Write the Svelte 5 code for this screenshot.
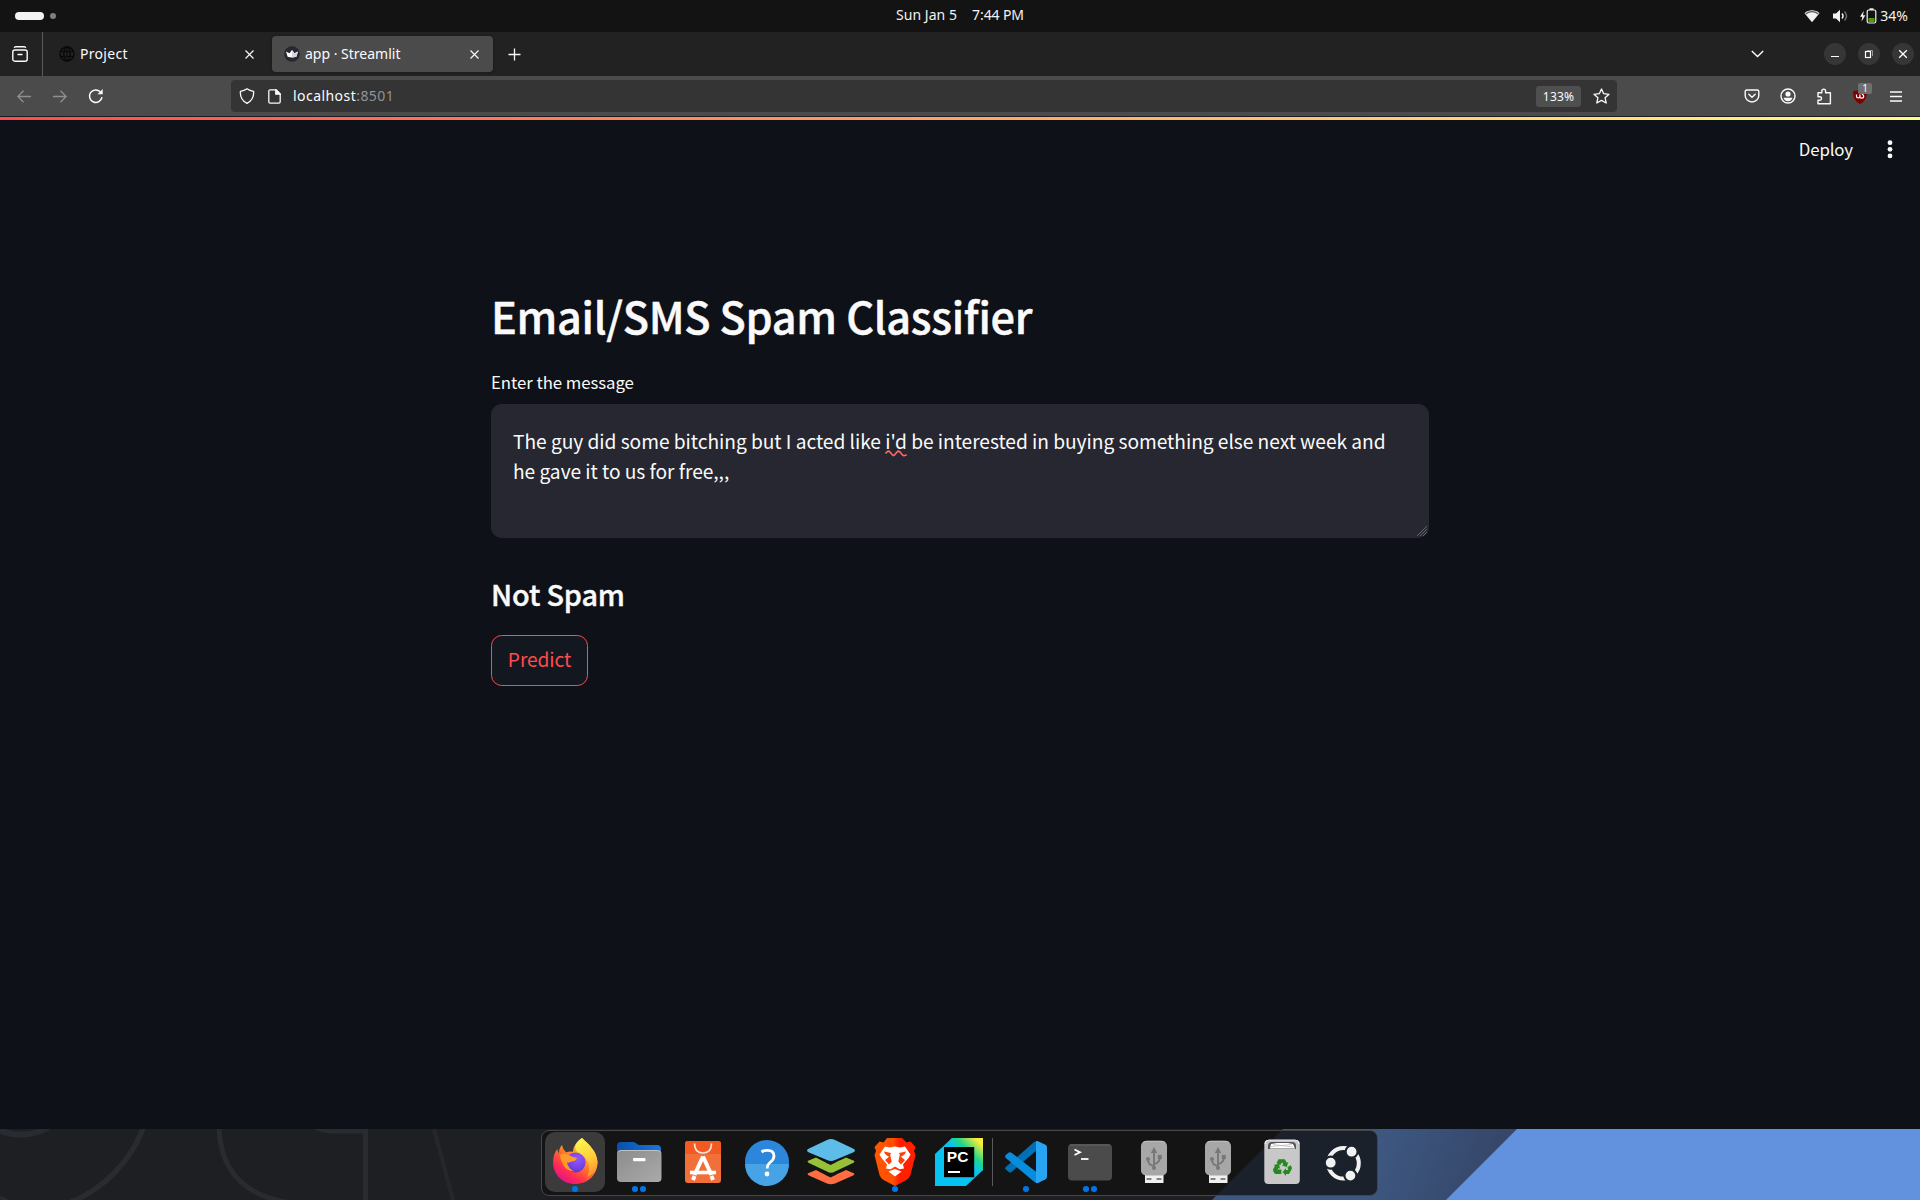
<script>
  const apps = [
    { id: 'firefox', dots: 1, active: true },
    { id: 'files', dots: 2 },
    { id: 'software', dots: 0 },
    { id: 'help', dots: 0 },
    { id: 'stack', dots: 0 },
    { id: 'brave', dots: 1 },
    { id: 'pycharm', dots: 0 },
    { id: 'separator', dots: 0 },
    { id: 'vscode', dots: 1 },
    { id: 'terminal', dots: 2 },
    { id: 'usb', dots: 0 },
    { id: 'usb', dots: 0 },
    { id: 'trash', dots: 0 },
    { id: 'ubuntu', dots: 0 }
  ];
</script>

<div class="screen">
  <header class="panel">
    <div class="workspaces"><span class="pill"></span><span class="dot"></span></div>
    <div class="clock"><span class="date">Sun Jan 5</span><span>7:44 PM</span></div>
    <div class="status">
      <svg class="wifi" width="16" height="14" viewBox="0 0 16 14">
        <path d="M.5 4.2C4.8.4 11.200.4 15.500 4.200L8 13.300Z" fill="#f2f2f2" />
        <path d="M1.700 4.900C5.600 2 10.400 2 14.300 4.900" fill="none" stroke="#555" stroke-width="1.200" />
      </svg>
      <svg class="volume" width="15" height="14" viewBox="0 0 15 14">
        <path d="M0 4.500h3L7 .8v12.400L3 9.500H0Z" fill="#f2f2f2" />
        <path d="M9 4.500c1.300 1.500 1.300 3.500 0 5" fill="none" stroke="#f2f2f2" stroke-width="1.400" />
        <path d="M11.500 2.500c2.500 2.700 2.500 6.300 0 9" fill="none" stroke="#777" stroke-width="1.300" />
      </svg>
      <svg class="battery" width="17" height="16" viewBox="0 0 17 16">
        <path d="M3.800 2.800 0 8.800h2.300l-.8 4.700L5.400 7.300H3Z" fill="#f2f2f2" />
        <rect x="7.200" y="2" width="8.600" height="13" rx="1.500" fill="none" stroke="#f2f2f2" stroke-width="1.200" />
        <rect x="9.500" y=".3" width="4" height="1.700" fill="#f2f2f2" />
        <rect x="8.500" y="10" width="6" height="4" fill="#4e9a06" />
      </svg>
      <span class="percent">34%</span>
    </div>
  </header>

  <nav class="tabs">
    <div class="overview">
      <svg width="16" height="16" viewBox="0 0 16 16" fill="none" stroke="#fbfbfe" stroke-width="1.400">
        <rect x=".8" y="4" width="14.400" height="11.200" rx="2" />
        <path d="M2.500 1.200C3 .8 3 .8 4 .8h8c1 0 1 0 1.500.4M6 8.500h4" stroke-linecap="round" />
      </svg>
    </div>
    <div class="tab">
      <svg class="favicon" width="16" height="16" viewBox="0 0 16 16" fill="none" stroke="#080808" stroke-width="1.300">
        <circle cx="8" cy="8" r="7" />
        <ellipse cx="8" cy="8" rx="3.200" ry="7" />
        <path d="M1.500 5.600h13M1.500 10.400h13M8 1v14" stroke-width="1" />
      </svg>
      <span class="name project">Project</span>
      <svg class="close" width="9" height="9" viewBox="0 0 9 9"><path d="M.5.5l8 8M8.500.5l-8 8" stroke="#fbfbfe" stroke-width="1.100" /></svg>
    </div>
    <div class="tab current">
      <svg class="favicon" width="16" height="16" viewBox="0 0 16 16">
        <circle cx="8" cy="8" r="7.800" fill="#262730" />
        <path d="M2 5.500 5.500 7.300 8 4l2.500 3.300L14 5.500l-1.600 5.300Q8 12 3.600 10.800Z" fill="#fff" />
        <path d="M8 4l2.500 3.300L14 5.500l-1.600 5.300L8 11.400Z" fill="#d5d5da" />
      </svg>
      <span class="name app">app · Streamlit</span>
      <svg class="close" width="9" height="9" viewBox="0 0 9 9"><path d="M.5.5l8 8M8.500.5l-8 8" stroke="#fbfbfe" stroke-width="1.100" /></svg>
    </div>
    <svg class="plus" width="13" height="13" viewBox="0 0 13 13"><path d="M6.500.5v12M.5 6.500h12" stroke="#fbfbfe" stroke-width="1.300" /></svg>
    <svg class="chevron" width="13" height="8" viewBox="0 0 13 8"><path d="M.8.9 6.500 6.600 12.200.9" fill="none" stroke="#fbfbfe" stroke-width="1.400" /></svg>
    <div class="controls">
      <span class="control"><svg width="22" height="22" viewBox="0 0 22 22"><path d="M7 13.500h8" stroke="#fff" /></svg></span>
      <span class="control">
        <svg width="22" height="22" viewBox="0 0 22 22" fill="none">
          <rect x="7.500" y="8.500" width="5" height="6" stroke="#fff" stroke-width="1.200" />
          <path d="M9 7.500h5.500V13" stroke="#999" />
        </svg>
      </span>
      <span class="control"><svg width="22" height="22" viewBox="0 0 22 22"><path d="M7.200 7.200l7.600 7.600M14.800 7.200l-7.600 7.600" stroke="#fff" stroke-width="1.300" /></svg></span>
    </div>
  </nav>

  <div class="toolbar">
    <div class="history">
      <svg width="14" height="13" viewBox="0 0 14 13" fill="none" stroke="#8f8f90" stroke-width="1.300"><path d="M14 6.500H1M6.500.8.9 6.500l5.600 5.700" /></svg>
      <svg width="14" height="13" viewBox="0 0 14 13" fill="none" stroke="#8f8f90" stroke-width="1.300"><path d="M0 6.500h13M7.500.8l5.600 5.700-5.600 5.700" /></svg>
      <svg class="reload" width="16" height="16" viewBox="0 0 16 16" fill="none" stroke="#fbfbfe" stroke-width="1.500">
        <path d="M14 9.200A6.300 6.300 0 1 1 12.300 3.800" />
        <path d="M14.700 1v5.200H9.500Z" fill="#fbfbfe" stroke="none" />
      </svg>
    </div>
    <div class="urlbar">
      <svg class="shield" width="16" height="16" viewBox="0 0 16 16" fill="none" stroke="#fbfbfe" stroke-width="1.300">
        <path d="M8 .8C10 2.300 12 3 14.600 3.400 15 8.500 12.800 12.800 8 15.300 3.200 12.800 1 8.500 1.400 3.400 4 3 6 2.300 8 .8Z" stroke-linejoin="round" />
      </svg>
      <svg class="page" width="13" height="15" viewBox="0 0 13 15" fill="none" stroke="#fbfbfe" stroke-width="1.300">
        <path d="M8 .8H2.200Q.8.8.8 2.200v10.600q0 1.400 1.400 1.400h8.600q1.400 0 1.400-1.400V5Z" stroke-linejoin="round" />
        <path d="M7.800.8 12.200 5.200H7.800Z" fill="#fbfbfe" />
      </svg>
      <span class="url">localhost<span class="port">:8501</span></span>
      <span class="zoom">133%</span>
      <svg class="star" width="17" height="16" viewBox="0 0 17 16" fill="none" stroke="#fbfbfe" stroke-width="1.300" stroke-linejoin="round">
        <path d="M8.500 1l2.200 4.700 5.300.6-3.900 3.500 1.100 5.200-4.700-2.600L3.800 15l1.100-5.200L1 6.300l5.300-.6Z" />
      </svg>
    </div>
    <div class="actions">
      <svg width="16" height="16" viewBox="0 0 16 16" fill="none" stroke="#fbfbfe" stroke-width="1.400">
        <path d="M2.800 2h10.400Q14.800 2 14.800 3.600v3.800a6.800 6.600 0 0 1-13.600 0V3.600Q1.200 2 2.800 2Z" />
        <path d="M4.800 6.200 8 9.300l3.200-3.100" stroke-linecap="round" />
      </svg>
      <svg width="16" height="16" viewBox="0 0 16 16">
        <circle cx="8" cy="8" r="7" fill="none" stroke="#fbfbfe" stroke-width="1.400" />
        <circle cx="8" cy="6" r="2.600" fill="#fbfbfe" />
        <path d="M3.500 9.800h9Q11.500 13.200 8 13.200T3.500 9.800Z" fill="#fbfbfe" />
      </svg>
      <svg width="16" height="17" viewBox="0 0 16 17" fill="none" stroke="#fbfbfe" stroke-width="1.400" stroke-linejoin="round">
        <path d="M2 4.800h3.800V3a1.900 1.900 0 0 1 3.800 0v1.800h4.800v11H2v-3.600h1.800a1.700 1.700 0 0 0 0-3.500H2Z" />
      </svg>
      <span class="blocker">
        <svg width="16" height="17" viewBox="0 0 16 17">
          <path d="M8 1c2 1.300 4 2 6.800 2 .4 6-1.500 10.300-6.800 13C2.700 13.300.8 9 1.200 3 4 3 6 2.300 8 1Z" fill="#800000" />
          <path d="M4.500 6.500v1.800a1.700 1.700 0 0 0 3.400 0V6.500m0 1.800a1.900 1.900 0 1 0 1.900-1.900" fill="none" stroke="#fff" stroke-width="1.200" />
        </svg>
        <span class="badge">1</span>
      </span>
      <svg width="12" height="11" viewBox="0 0 12 11"><path d="M0 1h12M0 5.500h12M0 10h12" stroke="#fbfbfe" stroke-width="1.300" /></svg>
    </div>
  </div>

  <main class="app-view">
    <div class="decoration"></div>
    <div class="app-header">
      <span class="deploy">Deploy</span>
      <svg width="6" height="20" viewBox="0 0 6 20" fill="#fafafa"><circle cx="3" cy="3.700" r="2.400" /><circle cx="3" cy="10.300" r="2.400" /><circle cx="3" cy="16.900" r="2.400" /></svg>
    </div>
    <section class="block">
      <h1>Email/SMS Spam Classifier</h1>
      <div class="label">Enter the message</div>
      <div class="textarea">
        <p>The guy did some bitching but I acted like <span class="misspelt">i'd<svg class="squiggle" width="22" height="7" viewBox="0 0 22 7"><path d="M.5 3.500 2 2Q3.500.5 5 2L7.500 5Q8.500 6 9.500 5L12 2Q13.500.5 15 2L17.500 5Q18.500 6 19.500 5.500L21.800 5" fill="none" stroke="#ff6666" stroke-width="1.700" /></svg></span> be interested in buying something else next week and</p>
        <p>he gave it to us for free,,,</p>
        <svg class="grip" width="12" height="12" viewBox="0 0 12 12"><path d="M1 11 11 1M4 11l7-7M7 11l4-4" stroke="#77777d" stroke-width=".8" /></svg>
      </div>
      <h2>Not Spam</h2>
      <button>Predict</button>
    </section>
  </main>

  <footer class="desktop">
    <svg class="wallpaper" width="1920" height="71" viewBox="0 0 1920 71">
      <defs>
        <linearGradient id="shade" gradientUnits="userSpaceOnUse" x1="1380" y1="30" x2="1480" y2="65">
          <stop offset="0" stop-color="#3d5780" /><stop offset="1" stop-color="#36476a" />
        </linearGradient>
      </defs>
      <rect width="1920" height="71" fill="#1e1f23" />
      <g fill="none" stroke="#2a2a31" stroke-width="5">
        <circle cx="21" cy="-48" r="53.500" stroke-width="6" />
        <circle cx="21" cy="-48" r="131" stroke-width="5.500" />
        <path d="M219 0Q222 62 286 73" />
        <path d="M313-3Q322 2 335 2h30.500v72" />
        <path d="M434 0l19 71" stroke="#26262b" stroke-width="4" />
        <path d="M0 68.500l8 4" stroke-width="4" />
      </g>
      <path d="M1283 0h640v71H1212Z" fill="url(#shade)" />
      <path d="M1517 0h403v71H1446Z" fill="#6292de" />
    </svg>
    <div class="dock">
      {#each apps as app}
        {#if app.id === 'separator'}
          <span class="separator"></span>
        {:else}
          <div class="launcher" class:active={app.active}>
            <svg width="48" height="48" viewBox="0 0 48 48">
              {#if app.id === 'firefox'}
                <defs>
                  <linearGradient id="ff" x1=".85" y1=".1" x2=".25" y2=".95">
                    <stop offset="0" stop-color="#fff44f" /><stop offset=".3" stop-color="#ffb02e" /><stop offset=".55" stop-color="#ff6a2a" /><stop offset=".8" stop-color="#ff2a55" /><stop offset="1" stop-color="#e31587" />
                  </linearGradient>
                  <radialGradient id="globe" cx=".6" cy=".3" r=".8">
                    <stop offset="0" stop-color="#9059ff" /><stop offset=".6" stop-color="#7542e5" /><stop offset="1" stop-color="#592acb" />
                  </radialGradient>
                  <linearGradient id="flame" x1=".4" y1="0" x2=".7" y2="1">
                    <stop offset="0" stop-color="#fff44f" /><stop offset=".5" stop-color="#ffd23b" /><stop offset="1" stop-color="#ff8f2e" />
                  </linearGradient>
                </defs>
                <path d="M31 0C39 7 46 14 46.500 24 46.500 37 37 46 24 46S2 36 2 24C2 19 3.500 14 6.500 11Q6.500 14 8 15 8 10 11 7q.5 4 4 7.200 3-.8 7-.5Q22 6 31 0Z" fill="url(#ff)" />
                <path d="M31 0C38 7 46 14 46.500 24 46 32 41 37 36 39 41 31 37 19 29 15.500 23 13 22 6 31 0Z" fill="url(#flame)" />
                <circle cx="24.500" cy="24.500" r="10" fill="url(#globe)" />
                <path d="M9 17Q13 13.500 22 19q2.500.5 4 1-1.500 3.500-5.500 3.500-2.500 1.500-4.500 1 1 6 7.500 9-9-.5-12-8Q9 21 9 17Z" fill="#ff9a2b" />
              {:else if app.id === 'files'}
                <defs>
                  <linearGradient id="folder" x1="0" y1="0" x2="1" y2="1"><stop offset="0" stop-color="#8c8c8c" /><stop offset="1" stop-color="#aaa" /></linearGradient>
                  <linearGradient id="back" x1="0" y1="0" x2="1" y2="0"><stop offset="0" stop-color="#0a50a8" /><stop offset="1" stop-color="#1b74dc" /></linearGradient>
                </defs>
                <path d="M2 8Q2 4 6 4h12q2 0 3.500 1.500T25 7h17q4 0 4 4v20H2Z" fill="url(#back)" />
                <rect x="2" y="12" width="44.500" height="32" rx="4" fill="url(#folder)" />
                <path d="M3 14.500Q4 12.500 6 12.500h36.500q2 0 3 2" fill="none" stroke="#c5c5c5" stroke-width=".9" />
                <rect x="18" y="20" width="12.500" height="3.300" rx="1" fill="#fff" />
              {:else if app.id === 'software'}
                <rect x="6" y="3" width="36" height="42" rx="3" fill="#f1703a" />
                <path d="M6 16V6q0-3 3-3h30q3 0 3 3v10Z" fill="#f25a22" />
                <path d="M15.500 5.500q0 9.500 8.500 9.500t8.500-9.500" fill="none" stroke="#fbe4da" stroke-width="1.700" />
                <g fill="none" stroke="#fff" stroke-width="4"><path d="M24 18.500 15.500 37M24 18.500 32.500 37" /><path d="M11 34.500h26" stroke-width="3.600" /><path d="M15.500 38l-1.500 4M32.500 38l1.500 4" stroke-width="4" /></g>
              {:else if app.id === 'help'}
                <circle cx="24" cy="24" r="22" fill="#2b86dc" />
                <path d="M2 26a22 22 0 0 0 44 0Z" fill="#45a3e6" />
                <path d="M18.500 14Q21 12.300 24.500 12.300q6.500 0 6.500 5.700 0 3.500-4 6.500-2.800 2.300-2.800 6" fill="none" stroke="#fff" stroke-width="2.800" />
                <circle cx="24" cy="36" r="2.400" fill="#fff" />
              {:else if app.id === 'stack'}
                <path d="M3 34.500 9 32q15 8 15 7.500T39 32l6 2.500q5 1.300 0 3.500L28 45.500q-4 1.500-8 0L3 38q-5-2.200 0-3.500Z" fill="#ff6e40" />
                <path d="M3 22l6-2.500q15 8 15 7.500t15-7.500l6 2.500q5 1.300 0 3.500L28 33.500q-4 2.500-8 0L3 25.500Q-2 23.300 3 22Z" fill="#97c039" />
                <path d="M2 10.500 20 2q4-1.800 8 0l18 8.500q4 2 0 4L28 22q-4 2-8 0L2 14.500q-4-2 0-4Z" fill="#5dbde8" />
              {:else if app.id === 'brave'}
                <defs><linearGradient id="brave" x1="0" x2="1"><stop offset="0" stop-color="#ff5500" /><stop offset=".45" stop-color="#ff5000" /><stop offset=".6" stop-color="#ff2000" /><stop offset="1" stop-color="#ff2000" /></linearGradient></defs>
                <path d="M16 0h15l4.500 4.500 4-1L44.500 9 43 13l1.500 4-5 20q-1 3-4 5L24 48l-11.500-6q-3-2-4-5L3.500 17 5 13 3.500 9l5-5.500 4 1Z" fill="url(#brave)" />
                <path d="M14 8.500l5 1 5-1 5 1 5-1 5.500 8-2 3.500-5.500 6.500 1 4-4.500.8-4.500-2.800-4.500 2.800-4.500-.8 1-4L10.500 20l-2-3.500Z" fill="#fff" />
                <path d="M13 13.500l7 1.500-.8 2 1.500 6.500-2.700 3-4-4.500 4-3.200Q14 17 13 13.500ZM35 13.500l-7 1.500.8 2-1.500 6.500 2.700 3 4-4.500-4-3.200Q34 17 35 13.500Z" fill="#ff4008" />
                <path d="M17.500 33.500 24 31l6.500 2.500L24 38.500Z" fill="#fff" />
              {:else if app.id === 'pycharm'}
                <defs><linearGradient id="pc" x1=".5" y1=".55" x2="1" y2=".05"><stop offset="0" stop-color="#07c3f2" /><stop offset=".35" stop-color="#21d789" /><stop offset=".85" stop-color="#fced3a" /></linearGradient></defs>
                <path d="M0 16 17 0h31v32L31 48H0Z" fill="#07c3f2" />
                <path d="M17 0h31v32L38 38 10 9Z" fill="url(#pc)" />
                <rect x="9" y="9" width="30.200" height="30.200" />
                <rect x="13" y="33" width="12" height="2" fill="#fff" />
                <text class="pc" x="11.800" y="24">PC</text>
              {:else if app.id === 'vscode'}
                <path d="M3.800 29 31.500 4.500Q33 3 35 3v9L9.500 34q-1.300 1-2.700 0l-3-2.500Q2.500 30.300 3.800 29Z" fill="#0070b5" />
                <path d="M3.800 20Q2.500 18.500 3.800 17l3-2.500Q8 13.800 9.500 14.800L35 34.500V45q-2-.2-3.500-1.700Z" fill="#078ddc" />
                <path d="M34 3.500q0-1 2-.3l7.500 3.500Q45 7.500 45 9.500v29q0 2-1.500 2.800L36 45q-2 .5-2-.5Z" fill="#27a5f2" />
              {:else if app.id === 'terminal'}
                <rect x="2" y="6" width="44" height="36.500" rx="4" fill="#4b4b4b" />
                <path d="M4 7h40" stroke="#656565" />
                <path d="M8.500 11.500 14 14.200 8.500 17" fill="none" stroke="#fff" stroke-width="1.800" />
                <path d="M15 21h7.500" stroke="#fff" stroke-width="1.800" />
              {:else if app.id === 'usb'}
                <path d="M15 34h18.500v11H15Z" fill="#f0f0f0" />
                <path d="M16.500 41h5M26.500 41h5" stroke="#858585" stroke-width="2" />
                <rect x="11" y="3" width="26" height="34.500" rx="5" fill="#a7a7a7" />
                <path d="M13 4.500q2-1.300 4-1.300h14q2 0 4 1.300" fill="none" stroke="#c4c4c4" />
                <g fill="none" stroke="#787878" stroke-width="1.900"><path d="M24 15v15M24 28q-6-1-6-6.500M24 26q6-1 6-7" /></g>
                <path d="M24 9l3.200 6h-6.400ZM27.800 17h4v4h-4Z" fill="#787878" /><circle cx="18" cy="21" r="2" fill="#787878" /><circle cx="24" cy="30" r="2" fill="#787878" />
              {:else if app.id === 'trash'}
                <rect x="6.300" y="2" width="35.500" height="44" rx="4" fill="#c8c8c8" />
                <path d="M7 6q0-4 4-4h26q4 0 4 4" fill="none" stroke="#eee" />
                <path d="M10 11V8q0-4 4-4h20q4 0 4 4v3Z" fill="#555" />
                <path d="M12 10.500 13 6l6-1h11l5 1 2 4.500Z" fill="#fff" />
                <path d="M13 8.500l21-2M15 6.500l20 2.500" stroke="#aaa" stroke-width=".6" />
                <g fill="#26891f">
                  <path d="M20.500 21.300h6.300l2 3.400 1.500-.8-1.500 5-5-1.300 1.600-1-1.300-2.300-2 3-3.600-2.200Z" />
                  <path d="M29.300 29.300l3.500-2 1 2.200q.3 1-.3 2l-2.500 4.500h-3v1.900l-3.500-3.900 3.500-3.800v1.700h2.300Z" />
                  <path d="M15.800 27l5-1.200 1.300 5-1.600-.9-.9 1.600h3.800v4.500h-5.200q-1.400 0-2-1.100l-1-1.900q-.5-1 0-2l1.800-3Z" />
                </g>
              {:else if app.id === 'ubuntu'}
                <circle cx="21.500" cy="25.300" r="15.300" fill="none" stroke="#f2f2f2" stroke-width="4" />
                <g fill="#f2f2f2" stroke="#1c232e" stroke-width="2.200"><circle cx="29.600" cy="13.700" r="6" /><circle cx="8.700" cy="24.700" r="6" /><circle cx="28.400" cy="37.600" r="6" /></g>
              {/if}
            </svg>
            <div class="dots">
              {#each Array(app.dots) as _}<i></i>{/each}
            </div>
          </div>
        {/if}
      {/each}
    </div>
  </footer>
</div>

<style>
  :global(body) { margin: 0; background: #0e1117; }
  svg { display: block; flex: none; }
  .screen { width: 1920px; height: 1200px; display: flex; flex-direction: column; overflow: hidden; color: #fbfbfe; font-family: "Noto Sans", sans-serif; font-size: 14px; line-height: 20px; }

  .panel { height: 32px; flex: none; box-sizing: border-box; padding: 0 12px 1px 15px; background: #131313; display: grid; grid-template-columns: 1fr auto 1fr; align-items: center; color: #f2f2f2; }
  .workspaces { display: flex; align-items: center; gap: 6px; padding-top: 1px; }
  .pill { width: 29px; height: 8px; border-radius: 4px; background: #f2f2f2; }
  .dot { width: 6px; height: 6px; border-radius: 50%; background: #808080; }
  .clock { display: flex; gap: 15px; padding: 0 3px 1px 0; letter-spacing: -.1px; }
  .date { letter-spacing: .05px; }
  .status { display: flex; align-items: center; justify-content: flex-end; padding-top: 1px; }
  .volume { margin-left: 13px; }
  .battery { margin-left: 12px; }
  .percent { margin-left: 3px; padding-bottom: 1px; }

  .tabs { height: 44px; flex: none; background: #222; display: flex; align-items: center; }
  .overview { width: 42px; height: 44px; border-right: 1px solid #5b5b5b; display: flex; align-items: center; box-sizing: content-box; }
  .overview svg { margin-left: 12px; }
  .tab { width: 221px; height: 36px; box-sizing: border-box; padding: 0 14px 0 12px; margin-left: 4px; border-radius: 4px; display: flex; align-items: center; }
  .tab.current { margin-left: 4px; background: #4b4b4b; box-shadow: 0 0 3px rgba(0, 0, 0, .4); }
  .name { margin-left: 5px; flex: 1; }
  .project { letter-spacing: .3px; }
  .plus { margin-left: 15px; }
  .chevron { margin-left: auto; }
  .controls { display: flex; gap: 12px; margin: 0 6px 0 60px; }
  .control { width: 22px; height: 22px; border-radius: 50%; background: #363636; }

  .toolbar { height: 40px; flex: none; background: #4b4b4b; border-bottom: 1px solid #1c1b22; display: flex; align-items: center; }
  .history { width: 231px; display: flex; align-items: center; gap: 22px; padding-left: 17px; box-sizing: border-box; }
  .reload { margin-left: -1px; }
  .urlbar { width: 1386px; height: 32px; box-sizing: border-box; border-radius: 4px; background: #343434; padding: 0 7px 0 8px; display: flex; align-items: center; }
  .page { margin-left: 13px; }
  .url { margin-left: 12px; flex: 1; letter-spacing: .45px; color: #fbfbfe; }
  .port { color: #929293; }
  .zoom { width: 45px; height: 21px; border-radius: 3px; background: #4f4f50; font-size: 12px; line-height: 21px; text-align: center; letter-spacing: .2px; }
  .star { margin-left: 12px; }
  .actions { margin-left: auto; padding-right: 18px; display: flex; align-items: center; gap: 20px; }
  .blocker { position: relative; margin-right: 2px; }
  .badge { position: absolute; left: 6px; top: -5px; width: 14px; height: 11px; border-radius: 2px; background: #6f6f70; font-size: 10px; line-height: 11px; text-align: center; }

  .app-view { flex: 1; min-height: 0; background: #0e1117; font-family: "Noto Sans CJK SC", sans-serif; color: #fafafa; }
  .decoration { height: 3px; background: linear-gradient(90deg, #ff4b4b, #fffd80); }
  .app-header { height: 57px; display: flex; justify-content: flex-end; align-items: center; padding-right: 27px; }
  .deploy { font-size: 16.8px; line-height: 24px; margin-right: 34px; letter-spacing: -.1px; }
  .block { width: 938px; margin: 109px auto 0; }
  h1 { margin: 0; font-weight: 500; font-size: 43.2px; line-height: 58px; letter-spacing: -.31px; -webkit-text-stroke: .5px #fafafa; }
  .label { margin-top: 26px; font-size: 16.8px; line-height: 24px; letter-spacing: -.06px; }
  .textarea { position: relative; height: 134px; box-sizing: border-box; margin-top: 10px; padding: 22px 21px 0 22px; background: #262730; border-radius: 10.700px; font-size: 19.2px; line-height: 30px; letter-spacing: -.045px; }
  .textarea p { margin: 0; white-space: nowrap; }
  .misspelt { position: relative; }
  .squiggle { position: absolute; left: 0; bottom: -2px; }
  .grip { position: absolute; right: 1px; bottom: 1px; }
  h2 { margin: 38px 0 0; font-weight: 500; font-size: 28.8px; line-height: 36px; letter-spacing: -.15px; -webkit-text-stroke: .4px #fafafa; }
  button { display: block; width: 97px; height: 51px; margin-top: 23px; padding: 0 0 3px; border: 1px solid #ff4b4b; border-radius: 10.700px; background: #131720; color: #ff4b4b; font: 19.2px/30px "Noto Sans CJK SC", sans-serif; letter-spacing: -.1px; }

  .desktop { height: 71px; flex: none; position: relative; display: flex; }
  .wallpaper { position: absolute; inset: 0; }
  .dock { position: relative; width: 837px; height: 66px; box-sizing: border-box; margin: 1px 0 0 541px; padding: 1px; border: 1px solid #464646; border-radius: 8px; background: rgba(17, 17, 17, .77); display: flex; }
  .launcher { width: 60px; height: 60px; flex: none; margin: 0 2px; border-radius: 10px; display: flex; flex-direction: column; align-items: center; padding-top: 6px; box-sizing: border-box; }
  .launcher.active { background: #3b3b3b; }
  .dots { height: 6px; display: flex; gap: 2.500px; }
  .dots i { width: 5.600px; height: 5.600px; border-radius: 50%; background: #0073e5; }
  .separator { width: 1px; height: 48px; flex: none; margin: 6px 1px 0; background: #5a5a5a; }
  .pc { fill: #fff; font: 700 15.500px "Liberation Sans", sans-serif; }
</style>
